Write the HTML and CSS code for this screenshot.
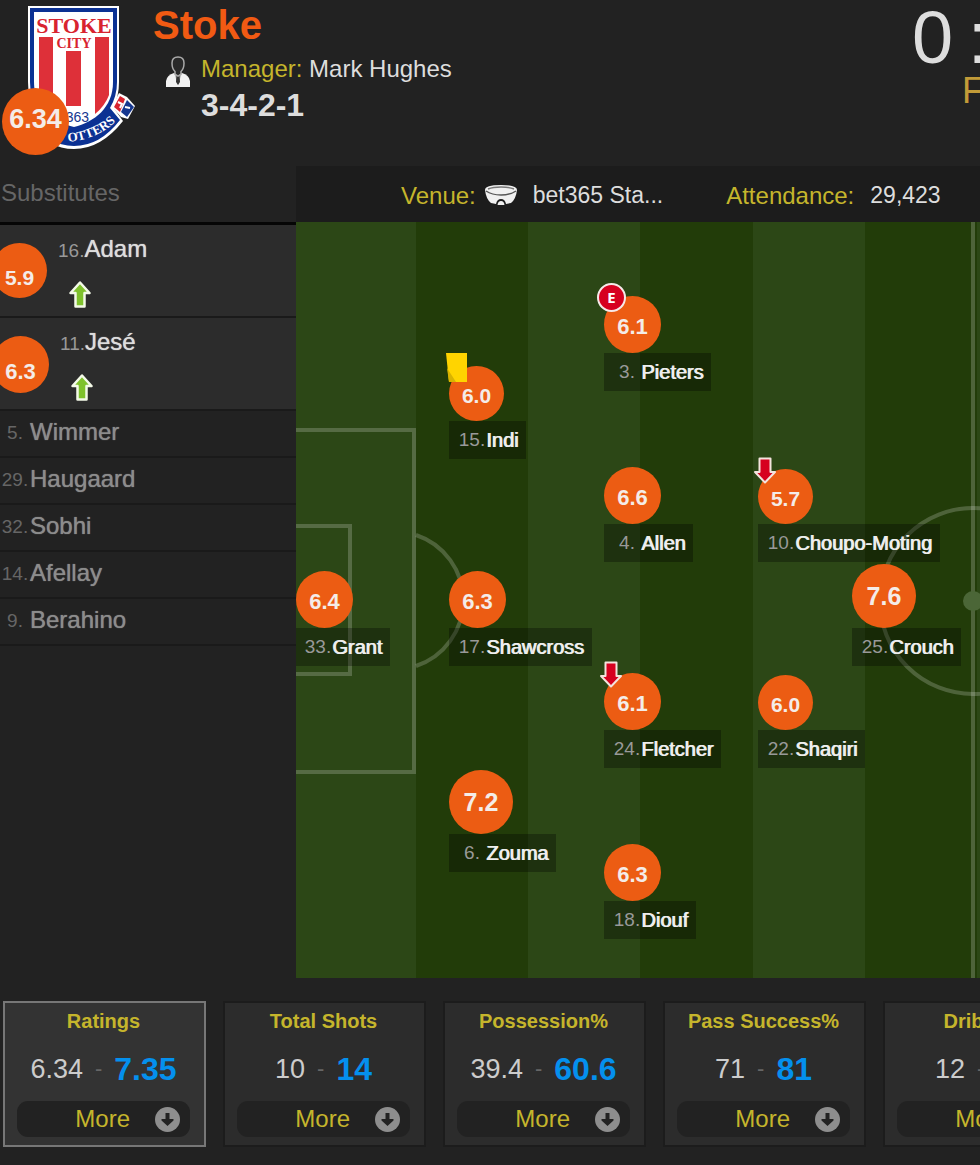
FILE: index.html
```html
<!DOCTYPE html>
<html lang="en">
<head>
    <meta charset="UTF-8">
    <meta name="viewport" content="width=device-width, initial-scale=1.0">
    <title>Stoke - Match Centre</title>
    <link rel="stylesheet" href="styles.css">
</head>
<body>
    <!-- shared icons -->
    <svg class="icon-defs" aria-hidden="true">
        <symbol id="arrow-up" viewBox="0 0 22 27">
            <path d="M11 1.5 L20.5 12 H15.5 V25.5 H6.500 V12 H1.5 Z" fill="#7fc22c" stroke="#f4fae8" stroke-width="2.5" stroke-linejoin="round"/>
        </symbol>
        <symbol id="arrow-down" viewBox="0 0 22 27">
            <path d="M11 25.500 L21 15 H16.500 V1.500 H5.500 V15 H1 Z" fill="#d6001f" stroke="#f3e3dd" stroke-width="2" stroke-linejoin="round"/>
        </symbol>
        <symbol id="more" viewBox="0 0 25 25">
            <circle cx="12.500" cy="12.500" r="12.500" fill="#8e8e8e"/>
            <path d="M10.500 6 H14.500 V12 H18.500 V13.500 L12.500 19 L6.500 13.500 V12 H10.500 Z" fill="#222"/>
        </symbol>
    </svg>

    <header class="match-header">
        <div class="crest">
            <svg class="crest-img" viewBox="27 5 109 146" role="img" aria-label="Stoke City">
                <defs>
                    <clipPath id="shield-clip"><path d="M34 12 H113 V82 C113 108 94 122 74 127 C54 122 34 108 34 82 Z"/></clipPath>
                    <path id="scroll-line" d="M68 142 Q101 139 121 116"/>
                </defs>
                <path d="M112 107 L119 93 L127 97 L135 106 L128 119 L121 117 Z" fill="#fff"/>
                <path d="M114 107 L120 96 L125 99 L120 112 Z" fill="#d8232f"/>
                <path d="M121 112 L127 100 L134 107 L127 117 Z" fill="#16378f"/>
                <path d="M118 102 L122 104 L120 108 M125 107 L130 108" stroke="#fff" stroke-width="2" fill="none"/>
                <path d="M28 6 H119 V82 Q119 97 113 107 L123 121 Q101 149 74 149 Q47 149 25 121 L34 107 Q28 97 28 82 Z" fill="#fff"/>
                <path d="M30 8 H117 V82 Q117 96 110 108 L120 120 Q100 146 74 146 Q48 146 28 120 L37 108 Q30 96 30 82 Z" fill="#0b3193"/>
                <path d="M34 12 H113 V82 C113 108 94 122 74 127 C54 122 34 108 34 82 Z" fill="#fff"/>
                <g clip-path="url(#shield-clip)" fill="#de3039">
                    <rect x="39" y="37" width="14" height="73"/>
                    <rect x="66" y="51" width="15" height="55"/>
                    <path d="M95 37 H109 V95 Q105 106 95 114 Z"/>
                </g>
                <text class="crest-name" x="74" y="33">STOKE</text>
                <text class="crest-city" x="74" y="48">CITY</text>
                <text class="crest-year" x="89" y="122">363</text>
                <text class="crest-scroll"><textPath href="#scroll-line">OTTERS</textPath></text>
            </svg>
            <span class="rating team-rating">6.34</span>
        </div>
        <div class="team-info">
            <h1 class="team-name">Stoke</h1>
            <p class="manager">
                <svg class="manager-icon" viewBox="0 0 24 32" aria-hidden="true">
                    <path d="M0 31 V25 Q1 19 8 17 H16 Q23 19 24 25 V31 Z" fill="#f2f2f2"/>
                    <path d="M8 17 L12 29 L16 17 Z" fill="#bbb"/>
                    <path d="M10.500 19 H13.500 L14 26 L12 29 L10 26 Z" fill="#333"/>
                    <path d="M6 7 Q6 1 12 1 Q18 1 18 7 Q18 13 15 15.500 V18 L12 20 L9 18 V15.500 Q6 13 6 7 Z" fill="#292929" stroke="#aaa" stroke-width="1.500"/>
                </svg>
                <span><span class="caption">Manager:</span> Mark Hughes</span>
            </p>
            <p class="formation">3-4-2-1</p>
        </div>
        <div class="score-box">
            <div class="score"><span>0</span><span>:</span><span>1</span></div>
            <div class="score-status">FT</div>
        </div>
    </header>

    <main class="match">
        <aside class="bench">
            <h2 class="bench-title">Substitutes</h2>
            <ul class="bench-list">
                <li class="sub used">
                    <span class="rating size-s">5.9</span>
                    <div><span class="sub-line"><span class="num">16.</span>Adam</span><svg class="arrow"><use href="#arrow-up"/></svg></div>
                </li>
                <li class="sub used">
                    <span class="rating size-m">6.3</span>
                    <div><span class="sub-line"><span class="num">11.</span>Jesé</span><svg class="arrow"><use href="#arrow-up"/></svg></div>
                </li>
                <li class="sub"><span class="num">5.</span>Wimmer</li>
                <li class="sub"><span class="num">29.</span>Haugaard</li>
                <li class="sub"><span class="num">32.</span>Sobhi</li>
                <li class="sub"><span class="num">14.</span>Afellay</li>
                <li class="sub"><span class="num">9.</span>Berahino</li>
            </ul>
        </aside>

        <section class="field">
            <div class="match-facts">
                <span class="caption">Venue:</span>
                <svg class="stadium" viewBox="0 0 32 21" aria-hidden="true">
                    <path d="M0 5 Q0 0 16 0 Q32 0 32 5 Q31 14 26 18 L21 19 Q20 14 16 14 Q12 14 11 19 L6 18 Q1 14 0 5 Z" fill="#f0f0f0"/>
                    <path d="M3 4 Q8 2 16 2 Q24 2 29 4" fill="none" stroke="#777" stroke-width="1.500"/>
                    <path d="M1 6 Q7 10 16 10 Q25 10 31 6" fill="none" stroke="#555" stroke-width="1.500"/>
                    <path d="M12.500 20 Q13 16 16 16 Q19 16 19.500 20 Z" fill="#f0f0f0"/>
                </svg>
                <span class="fact">bet365 Sta...</span>
                <span class="caption attendance">Attendance:</span>
                <span class="fact">29,423</span>
            </div>

            <div class="pitch">
                <svg class="pitch-lines" viewBox="0 0 684 756" preserveAspectRatio="xMinYMin slice" aria-hidden="true">
                    <rect width="684" height="756" fill="#2c4716"/>
                    <path d="M120 0h112v756h-112zM344 0h113v756h-113zM569 0h112v756h-112z" fill="#223c09"/>
                    <g class="chalk">
                        <path d="M0 208 H118 V550 H0"/>
                        <path d="M0 304 H54 V452 H0"/>
                        <path d="M120 313 A69 69 0 0 1 120 444"/>
                        <path d="M677 0 V756"/>
                        <circle cx="677" cy="379" r="93"/>
                    </g>
                    <circle cx="677" cy="379" r="10" fill="#4b6637"/>
                </svg>

                <div class="player grant">
                    <span class="rating size-m">6.4</span>
                    <span class="label"><span class="num">33.</span>Grant</span>
                </div>
                <div class="player indi">
                    <span class="rating size-s">6.0</span>
                    <span class="label"><span class="num">15.</span>Indi</span>
                    <svg class="event" viewBox="0 0 22 30"><path d="M0 0 H21 V29 H3 Z" fill="#ffd400"/><path d="M1 15 L10 29 H3 Z" fill="#d9b300"/></svg>
                </div>
                <div class="player shawcross">
                    <span class="rating size-m">6.3</span>
                    <span class="label"><span class="num">17.</span>Shawcross</span>
                </div>
                <div class="player zouma">
                    <span class="rating size-l">7.2</span>
                    <span class="label"><span class="num">6.</span>Zouma</span>
                </div>
                <div class="player pieters">
                    <span class="rating size-m">6.1</span>
                    <span class="label"><span class="num">3.</span>Pieters</span>
                    <span class="event error">E</span>
                </div>
                <div class="player allen">
                    <span class="rating size-m">6.6</span>
                    <span class="label"><span class="num">4.</span>Allen</span>
                </div>
                <div class="player fletcher">
                    <span class="rating size-m">6.1</span>
                    <span class="label"><span class="num">24.</span>Fletcher</span>
                    <svg class="event arrow"><use href="#arrow-down"/></svg>
                </div>
                <div class="player diouf">
                    <span class="rating size-m">6.3</span>
                    <span class="label"><span class="num">18.</span>Diouf</span>
                </div>
                <div class="player choupo">
                    <span class="rating size-s">5.7</span>
                    <span class="label"><span class="num">10.</span>Choupo-Moting</span>
                    <svg class="event arrow"><use href="#arrow-down"/></svg>
                </div>
                <div class="player shaqiri">
                    <span class="rating size-s">6.0</span>
                    <span class="label"><span class="num">22.</span>Shaqiri</span>
                </div>
                <div class="player crouch">
                    <span class="rating size-l">7.6</span>
                    <span class="label"><span class="num">25.</span>Crouch</span>
                </div>
            </div>
        </section>
    </main>

    <section class="stats">
        <div class="stat active">
            <h3 class="stat-title">Ratings</h3>
            <p class="stat-values"><span>6.34</span><span class="dash">-</span><span class="away">7.35</span></p>
            <button class="more-button">More<svg class="more-icon"><use href="#more"/></svg></button>
        </div>
        <div class="stat">
            <h3 class="stat-title">Total Shots</h3>
            <p class="stat-values"><span>10</span><span class="dash">-</span><span class="away">14</span></p>
            <button class="more-button">More<svg class="more-icon"><use href="#more"/></svg></button>
        </div>
        <div class="stat">
            <h3 class="stat-title">Possession%</h3>
            <p class="stat-values"><span>39.4</span><span class="dash">-</span><span class="away">60.6</span></p>
            <button class="more-button">More<svg class="more-icon"><use href="#more"/></svg></button>
        </div>
        <div class="stat">
            <h3 class="stat-title">Pass Success%</h3>
            <p class="stat-values"><span>71</span><span class="dash">-</span><span class="away">81</span></p>
            <button class="more-button">More<svg class="more-icon"><use href="#more"/></svg></button>
        </div>
        <div class="stat">
            <h3 class="stat-title">Dribbles</h3>
            <p class="stat-values"><span>12</span><span class="dash">-</span><span class="away">13</span></p>
            <button class="more-button">More<svg class="more-icon"><use href="#more"/></svg></button>
        </div>
    </section>
</body>
</html>
```
FILE: styles.css
```css
*{
    box-sizing: border-box;
}
body{
    margin: 0;
    background-color: #222;
    color: #ddd;
    font-family: "Liberation Sans", Arial, sans-serif;
    font-size: 24px;
    overflow-x: hidden;
}
h1, h2, h3, p, ul{
    margin: 0;
    padding: 0;
}
.icon-defs{
    display: none;
}
.caption{
    color: #c5b52c;
}

/* header */
.match-header{
    display: flex;
    min-height: 166px;
    overflow: hidden;
}
.crest{
    position: relative;
    width: 153px;
    padding: 5px 0 0 27px;
}
.crest-img{
    display: block;
    width: 109px;
    height: 146px;
}
.crest-name, .crest-city{
    text-anchor: middle;
    font-family: "Liberation Serif", serif;
    font-weight: bold;
    fill: #d8232f;
}
.crest-name{
    font-size: 22px;
}
.crest-city{
    font-size: 14px;
}
.crest-year{
    text-anchor: end;
    font-size: 14px;
    fill: #16378f;
}
.crest-scroll{
    font-family: "Liberation Serif", serif;
    font-size: 13px;
    font-weight: bold;
    fill: #fff;
}
.rating{
    display: flex;
    align-items: center;
    justify-content: center;
    border-radius: 50%;
    background-color: #ec5c13;
    color: #f4ece8;
    font-weight: bold;
}
.team-rating{
    position: absolute;
    left: 2px;
    top: 88px;
    width: 67px;
    height: 67px;
    padding-bottom: 4px;
    font-size: 27px;
}
.team-name{
    color: #f15a13;
    font-size: 40px;
    line-height: 50px;
}
.manager{
    display: flex;
    align-items: center;
    gap: 11px;
    padding-left: 13px;
    line-height: 38px;
}
.manager-icon{
    width: 24px;
    height: 32px;
    margin-top: 6px;
}
.formation{
    padding-left: 48px;
    font-size: 32px;
    font-weight: bold;
    line-height: 34px;
}
.score-box{
    width: 144px;
    margin-left: auto;
    margin-right: -76px;
    text-align: center;
}
.score{
    display: flex;
    justify-content: space-between;
    padding-right: 12px;
    font-size: 74px;
    line-height: 75px;
}
.score-status{
    color: #c29b38;
    font-size: 36px;
    line-height: 32px;
}

/* substitutes */
.match{
    display: grid;
    grid-template-columns: 296px 1fr;
}
.bench-title{
    height: 59px;
    padding-left: 1px;
    border-bottom: 3px solid #050505;
    color: #666;
    font-size: 24px;
    font-weight: normal;
    line-height: 54px;
}
.bench-list{
    list-style: none;
}
.sub{
    display: flex;
    height: 47px;
    border-bottom: 2px solid #1a1a1a;
    color: #8c8c8c;
    line-height: 42px;
    text-shadow: 0 0 1px;
}
.sub .num{
    width: 30px;
}
.num{
    color: #999;
    font-size: 19px;
    text-align: center;
    text-shadow: none;
}
.sub > .num{
    color: #666;
    line-height: 44px;
}
.sub.used{
    height: 93px;
    gap: 11px;
    background-color: #2c2c2c;
    color: #ddd;
    line-height: 32px;
    padding-top: 8px;
}
.sub .rating{
    margin-top: 10px;
    margin-left: -8px;
    padding-top: 14px;
    text-shadow: none;
}
.sub .arrow{
    display: block;
    margin: 14px 0 0 11px;
}
.arrow{
    width: 22px;
    height: 27px;
}
.sub-line{
    display: block;
}

/* pitch */
.match-facts{
    display: flex;
    align-items: center;
    height: 56px;
    padding: 3px 0 0 105px;
    background-color: #1c1c1c;
    white-space: nowrap;
}
.stadium{
    width: 32px;
    height: 21px;
    margin: 0 16px 0 9px;
}
.fact{
    font-size: 23px;
}
.attendance{
    margin-left: 63px;
    margin-right: 16px;
}
.pitch{
    position: relative;
    height: 756px;
    overflow: hidden;
}
.pitch-lines{
    display: block;
    width: 100%;
    height: 100%;
}
.chalk{
    fill: none;
    stroke: #fff;
    stroke-opacity: 0.2;
    stroke-width: 4;
}
/* every player is pinned by the bottom of the name label */
.player{
    position: absolute;
    transform: translateY(-100%);
}
.size-s{
    width: 55px;
    height: 55px;
    font-size: 21px;
}
.size-m{
    width: 57px;
    height: 57px;
    font-size: 22px;
}
.size-l{
    width: 64px;
    height: 64px;
    font-size: 25px;
}
.player .size-s, .player .size-m{
    padding-top: 4px;
}
.label{
    display: flex;
    height: 38px;
    padding: 0 8px 0 9px;
    background-color: rgba(0, 0, 0, 0.3);
    color: #eee;
    font-size: 20px;
    line-height: 38px;
    text-shadow: 1px 0 0;
    white-space: nowrap;
}
.label .num{
    width: 28px;
}
.event{
    position: absolute;
    left: -3px;
    top: -13px;
    width: 22px;
    height: 30px;
}
.event.arrow{
    left: -4px;
    top: -12px;
    height: 27px;
}
.error{
    left: -7px;
    width: 29px;
    height: 29px;
    border: 2px solid #f6e9e9;
    border-radius: 50%;
    background-color: #d6001f;
    color: #fff;
    font-family: "Open Sans", sans-serif;
    font-size: 15px;
    font-weight: bold;
    line-height: 25px;
    text-align: center;
}
.grant{ left: 0; top: 444px; }
.grant .label{ padding-left: 8px; }
.indi{ left: 153px; top: 237px; }
.shawcross{ left: 153px; top: 444px; }
.zouma{ left: 153px; top: 650px; }
.pieters{ left: 308px; top: 169px; }
.allen{ left: 308px; top: 340px; }
.fletcher{ left: 308px; top: 546px; }
.diouf{ left: 308px; top: 717px; }
.choupo{ left: 462px; top: 340px; }
.shaqiri{ left: 462px; top: 546px; }
.crouch{ left: 556px; top: 444px; }

/* stats */
.stats{
    display: flex;
    gap: 17px;
    padding: 23px 0 18px 3px;
    overflow: hidden;
}
.stat{
    flex: 0 0 203px;
    padding: 0 14px 8px 12px;
    border: 2px solid #1c1c1c;
    background-color: #2c2c2c;
}
.stat.active{
    border-color: #777;
    background-color: #333;
}
.stat-title{
    color: #c5b52c;
    font-size: 20px;
    line-height: 36px;
    text-align: center;
    white-space: nowrap;
}
.stat-values{
    display: flex;
    justify-content: center;
    gap: 12px;
    padding-bottom: 2px;
    color: #ccc;
    font-size: 27px;
    line-height: 60px;
}
.dash{
    color: #666;
    font-size: 22px;
}
.away{
    color: #0490ee;
    font-size: 32px;
    font-weight: bold;
}
.more-button{
    display: flex;
    align-items: center;
    justify-content: flex-end;
    gap: 25px;
    width: 100%;
    height: 36px;
    padding: 0 10px 0 0;
    border: none;
    border-radius: 11px;
    background-color: #222;
    color: #c5b52c;
    font-family: inherit;
    font-size: 24px;
    cursor: pointer;
}
.more-button:hover{
    background-color: #1a1a1a;
}
.more-icon{
    width: 25px;
    height: 25px;
}
```
